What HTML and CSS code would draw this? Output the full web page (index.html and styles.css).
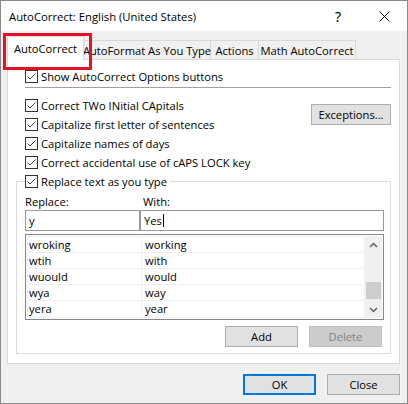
FILE: index.html
```html
<!DOCTYPE html>
<html>
<head>
<meta charset="utf-8">
<title>AutoCorrect</title>
<link rel="stylesheet" href="styles.css">
</head>
<body>
<div class="window">
  <div class="titlebar">
    <span class="title">AutoCorrect: English (United States)</span>
    <span class="tb-btn help">?</span>
    <span class="tb-btn close"><svg width="11" height="11" viewBox="0 0 11 11"><path d="M0.5 0.5L10.5 10.5M10.5 0.5L0.5 10.5" stroke="#000" stroke-width="1" fill="none"/></svg></span>
  </div>
  <div class="client">
    <div class="tabs">
      <div class="tab active">AutoCorrect</div>
      <div class="tab t2">AutoFormat As You Type</div>
      <div class="tab t3">Actions</div>
      <div class="tab t4">Math AutoCorrect</div>
    </div>
    <div class="panel">
      <div class="check first"><svg class="cb" viewBox="0 0 13 13"><rect x="0.5" y="0.5" width="12" height="12" fill="#fff" stroke="#333"/><path d="M2.5 6.5L5 9L10.5 3.5" fill="none" stroke="#444" stroke-width="1"/></svg><span>Show AutoCorrect Options buttons</span></div>
      <div class="sep"></div>
      <div class="opts">
        <div class="opt-list">
          <div class="check"><svg class="cb" viewBox="0 0 13 13"><rect x="0.5" y="0.5" width="12" height="12" fill="#fff" stroke="#333"/><path d="M2.5 6.5L5 9L10.5 3.5" fill="none" stroke="#444" stroke-width="1"/></svg><span>Correct TWo INitial CApitals</span></div>
          <div class="check"><svg class="cb" viewBox="0 0 13 13"><rect x="0.5" y="0.5" width="12" height="12" fill="#fff" stroke="#333"/><path d="M2.5 6.5L5 9L10.5 3.5" fill="none" stroke="#444" stroke-width="1"/></svg><span>Capitalize first letter of sentences</span></div>
          <div class="check"><svg class="cb" viewBox="0 0 13 13"><rect x="0.5" y="0.5" width="12" height="12" fill="#fff" stroke="#333"/><path d="M2.5 6.5L5 9L10.5 3.5" fill="none" stroke="#444" stroke-width="1"/></svg><span>Capitalize names of days</span></div>
          <div class="check"><svg class="cb" viewBox="0 0 13 13"><rect x="0.5" y="0.5" width="12" height="12" fill="#fff" stroke="#333"/><path d="M2.5 6.5L5 9L10.5 3.5" fill="none" stroke="#444" stroke-width="1"/></svg><span>Correct accidental use of cAPS LOCK key</span></div>
        </div>
        <button class="btn exceptions">Exceptions...</button>
      </div>
      <fieldset class="group">
        <legend class="check legend"><svg class="cb" viewBox="0 0 13 13"><rect x="0.5" y="0.5" width="12" height="12" fill="#fff" stroke="#333"/><path d="M2.5 6.5L5 9L10.5 3.5" fill="none" stroke="#444" stroke-width="1"/></svg><span>Replace text as you type</span></legend>
        <div class="labels"><span class="replace-label">Replace:</span><span class="with-label">With:</span></div>
        <div class="inputs">
          <div class="field f-replace">y</div>
          <div class="field f-with">Yes<span class="caret"></span></div>
        </div>
        <div class="list">
          <div class="rows">
            <div class="row"><span class="c1">wroking</span><span class="c2">working</span></div>
            <div class="row"><span class="c1">wtih</span><span class="c2">with</span></div>
            <div class="row"><span class="c1">wuould</span><span class="c2">would</span></div>
            <div class="row"><span class="c1">wya</span><span class="c2">way</span></div>
            <div class="row"><span class="c1">yera</span><span class="c2">year</span></div>
          </div>
          <div class="scrollbar">
            <div class="arrow"><svg width="9" height="6" viewBox="0 0 9 6"><path d="M1 5L4.5 1.5L8 5" fill="none" stroke="#606060" stroke-width="1.5"/></svg></div>
            <div class="track"><div class="thumb"></div></div>
            <div class="arrow"><svg width="9" height="6" viewBox="0 0 9 6"><path d="M1 1L4.5 4.5L8 1" fill="none" stroke="#606060" stroke-width="1.5"/></svg></div>
          </div>
        </div>
        <div class="group-btns">
          <button class="btn">Add</button>
          <button class="btn disabled">Delete</button>
        </div>
      </fieldset>
    </div>
    <div class="footer">
      <button class="btn default">OK</button>
      <button class="btn">Close</button>
    </div>
  </div>
</div>
</body>
</html>
```

FILE: styles.css
```css
* {
  box-sizing: border-box;
}

html, body {
  margin: 0;
  padding: 0;
  background: #ffffff;
}

body {
  font-family: "Open Sans", "Noto Sans", sans-serif;
  font-size: 11.2px;
  line-height: 15px;
  color: #000000;
}

.window {
  width: 408px;
  height: 404px;
  border: 1px solid #8a8a8a;
  display: flex;
  flex-direction: column;
  background: #f0f0f0;
}

.titlebar {
  height: 30px;
  flex: none;
  background: #ffffff;
  display: flex;
  align-items: center;
  padding-left: 8px;
}

.title {
  flex: 1;
  font-size: 11.3px;
  white-space: nowrap;
}

.tb-btn {
  width: 46px;
  height: 30px;
  display: flex;
  align-items: center;
  justify-content: center;
}

.help {
  font-family: "Noto Sans", sans-serif;
  font-size: 14px;
}

.client {
  flex: 1;
  padding: 5px 7px 0 6px;
  display: flex;
  flex-direction: column;
}

.tabs {
  display: flex;
  align-items: flex-end;
  height: 23px;
  flex: none;
}

.tab {
  height: 19px;
  border-top: 1px solid #d9d9d9;
  border-right: 1px solid #d9d9d9;
  background: #f0f0f0;
  display: flex;
  align-items: center;
  justify-content: center;
  white-space: nowrap;
}

.tab.active {
  width: 77px;
  height: 24px;
  margin-bottom: -1px;
  padding-bottom: 1px;
  border-left: 1px solid #d9d9d9;
  background: #ffffff;
  position: relative;
  z-index: 2;
}

.tab.active::after {
  content: "";
  position: absolute;
  left: -5px;
  top: -4px;
  width: 83px;
  height: 31px;
  border: 3px solid #e81123;
}

.t2 { width: 127px; }
.t3 { width: 48px; }
.t4 { width: 97px; }

.panel {
  height: 305px;
  flex: none;
  background: #ffffff;
  border: 1px solid #d9d9d9;
  padding: 7px 8px 0 8px;
  display: flex;
  flex-direction: column;
}

.check {
  display: flex;
  align-items: center;
  height: 19px;
  padding-left: 9px;
  white-space: nowrap;
}

.cb {
  width: 13px;
  height: 13px;
  margin-right: 3px;
  flex: none;
}

.sep {
  height: 1px;
  background: #a0a0a0;
  margin: 1px 0 8px 9px;
  flex: none;
}

.opts {
  display: flex;
  justify-content: space-between;
  align-items: flex-start;
}

.btn {
  width: 73px;
  height: 21px;
  padding: 0;
  background: #e1e1e1;
  border: 1px solid #adadad;
  font: inherit;
  color: #000000;
}

.exceptions {
  width: 80px;
  margin-top: 8px;
}

.btn.disabled {
  background: #cccccc;
  border-color: #bfbfbf;
  color: #838383;
}

.btn.default {
  border: 2px solid #0078d7;
}

.group {
  margin: 0;
  padding: 0 6px 6px 8px;
  border: 1px solid #dcdcdc;
  min-width: 0;
}

.legend {
  padding: 0 3px 0 0;
}

.labels {
  display: flex;
  height: 16px;
  line-height: 16px;
  margin-top: 3px;
}

.replace-label {
  width: 115px;
}

.with-label {
  padding-left: 3px;
}

.inputs {
  display: flex;
}

.field {
  height: 21px;
  border: 1px solid #999999;
  background: #ffffff;
  padding-left: 3px;
  display: flex;
  align-items: center;
}

.f-replace { width: 115px; }
.f-with { width: 244px; }

.caret {
  width: 1px;
  height: 13px;
  background: #000000;
  margin-left: 1px;
}

.list {
  margin-top: 3px;
  height: 86px;
  border: 1px solid #828790;
  padding: 1px;
  display: flex;
  background: #ffffff;
}

.rows {
  flex: 1;
  border-bottom: 1px solid #f0f0f0;
}

.row {
  display: flex;
  height: 16px;
  border-top: 1px solid #f0f0f0;
  border-left: 1px solid #f0f0f0;
  border-right: 1px solid #f0f0f0;
}

.c1 {
  width: 114px;
  padding-left: 1px;
  border-right: 1px solid #f0f0f0;
  display: flex;
  align-items: center;
}

.c2 {
  flex: 1;
  padding-left: 3px;
  display: flex;
  align-items: center;
}

.scrollbar {
  width: 17px;
  flex: none;
  background: #f0f0f0;
  display: flex;
  flex-direction: column;
}

.arrow {
  height: 17px;
  flex: none;
  display: flex;
  align-items: center;
  justify-content: center;
}

.track {
  flex: 1;
  display: flex;
  flex-direction: column;
  justify-content: flex-end;
}

.thumb {
  height: 17px;
  margin: 0 1px 2px 1px;
  background: #cdcdcd;
}

.group-btns {
  display: flex;
  justify-content: flex-end;
  gap: 11px;
  margin-top: 6px;
  padding-right: 2px;
}

.footer {
  display: flex;
  justify-content: flex-end;
  gap: 11px;
  margin-top: 10px;
}
```
